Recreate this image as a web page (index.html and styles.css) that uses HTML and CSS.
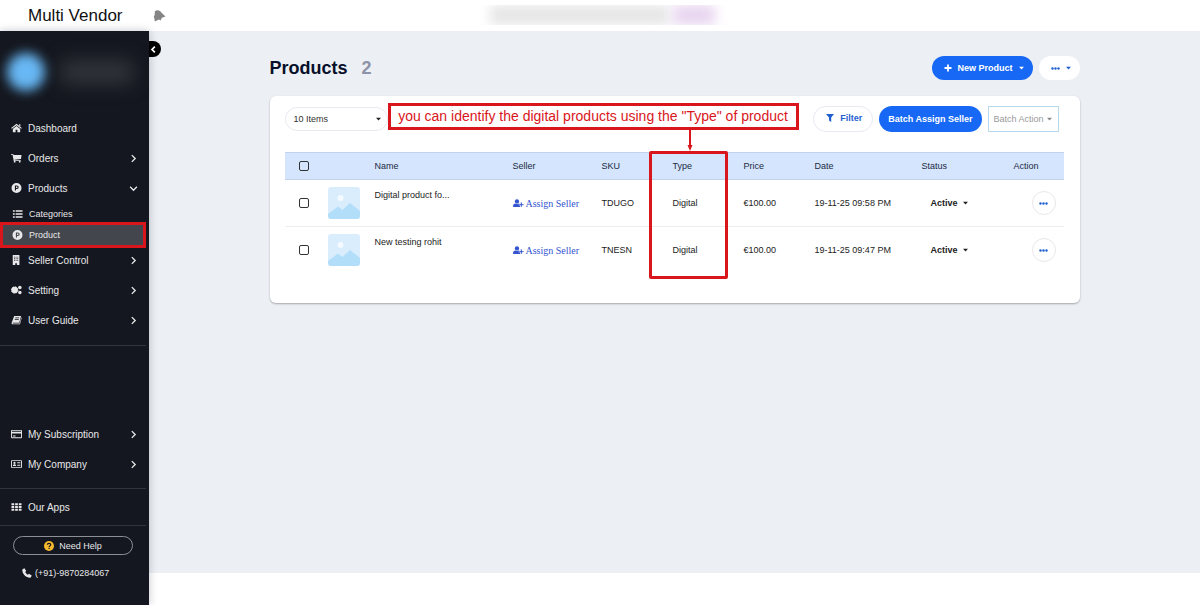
FILE: index.html
```html
<!DOCTYPE html>
<html lang="en">
<head>
    <meta charset="UTF-8">
    <meta name="viewport" content="width=device-width, initial-scale=1.0">
    <title>Multi Vendor - Products</title>
    <link rel="stylesheet" href="styles.css">
</head>
<body>
    <!-- shared icons -->
    <svg class="sprite" aria-hidden="true">
        <symbol id="chevron" viewBox="0 0 8 8"><path d="M2.5 1 5.5 4 2.5 7" fill="none" stroke="currentColor" stroke-width="1.2"/></symbol>
        <symbol id="caret" viewBox="0 0 6 4"><path d="M0 .5h6L3 3.7z"/></symbol>
        <symbol id="dots" viewBox="0 0 9 3"><circle cx="1.5" cy="1.5" r="1.2"/><circle cx="4.5" cy="1.5" r="1.2"/><circle cx="7.5" cy="1.5" r="1.2"/></symbol>
        <symbol id="product" viewBox="0 0 10 10"><path fill-rule="evenodd" d="M5 0a5 5 0 1 1 0 10A5 5 0 0 1 5 0zM3.4 2.4v5.2h1.1V6h.9a1.8 1.8 0 0 0 0-3.6zm1.1 1h.8a.8.8 0 0 1 0 1.6h-.8z"/></symbol>
        <symbol id="add-user" viewBox="0 0 12 10"><circle cx="4.3" cy="2.7" r="2.4"/><path d="M0 9V7.8C0 6.2 1.2 5 2.4 5c1.2.7 2.6.7 3.8 0 .7.1 1.1.4 1.5.9V9z"/><path d="M8.4 3.6h1.5v1.9h1.9V7H9.9v1.9H8.4V7H6.5V5.500h1.9z" stroke="#fff" stroke-width=".4"/></symbol>
        <symbol id="picture" viewBox="0 0 32 32"><rect width="32" height="32" rx="3" fill="#d9edfd"/><circle cx="12.500" cy="11" r="3" fill="#f4faff"/><path d="M0 27l10-7.500 4.500 3.500L22 16l10 8v5a3 3 0 0 1-3 3H3a3 3 0 0 1-3-3z" fill="#b3defa"/></symbol>
    </svg>

    <header class="topbar">
        <span class="brand">Multi Vendor</span>
        <svg class="bell" viewBox="0 0 14 14"><path d="M2 2.500C4.500 0 8 1.500 9.200 4L13.500 8l-4 1.500-1.200 3-2-1.200L2 13.500l-.5-3.200L.8 8l1-1.500z"/></svg>
        <div class="notice"><span class="notice-text"></span><span class="notice-tag"></span></div>
    </header>

    <div class="layout">
        <aside class="sidebar">
            <div class="profile">
                <span class="avatar"></span>
                <span class="profile-name"></span>
            </div>
            <nav>
                <ul class="menu">
                    <li><a href="#"><svg class="icon" viewBox="0 0 12 10"><path d="M6 .3 11.800 5l-.8.900-5-4-5 4L.2 5zM8.700.8h1.500v2.500L8.700 2zM2 6l4-3.200L10 6v3.700H7V6.800H5v2.900H2z"/></svg>Dashboard</a></li>
                    <li><a href="#"><svg class="icon" viewBox="0 0 12 10"><path d="M0 .5h2.400l.4 1.200h8.700l-.6 4.300-7 .8.2.7h6.600v.8H3L1.700 1.400H0z"/><circle cx="4" cy="9" r="1"/><circle cx="9.500" cy="9" r="1"/></svg>Orders<svg class="arrow"><use href="#chevron"/></svg></a></li>
                    <li>
                        <a href="#"><svg class="icon"><use href="#product"/></svg>Products<svg class="arrow open"><use href="#chevron"/></svg></a>
                        <ul class="submenu">
                            <li><a href="#"><svg class="icon" viewBox="0 0 12 10"><path d="M1 1h2v1.600H1zM4 1h7.500v1.600H4zM1 4.200h2v1.600H1zm3 0h7.500v1.600H4zM1 7.400h2V9H1zm3 0h7.500V9H4z"/></svg>Categories</a></li>
                            <li class="active"><a href="#"><svg class="icon"><use href="#product"/></svg>Product</a></li>
                        </ul>
                    </li>
                    <li><a href="#"><svg class="icon" viewBox="0 0 12 12"><path fill-rule="evenodd" d="M1.500 0h8v12H6.500v-2h-2v2h-3zM3 2v1h1V2zm2 0v1h1V2zm2 0v1h1V2zM3 4v1h1V4zm2 0v1h1V4zm2 0v1h1V4zM3 6v1h1V6zm2 0v1h1V6zm2 0v1h1V6z"/></svg>Seller Control<svg class="arrow"><use href="#chevron"/></svg></a></li>
                    <li><a href="#"><svg class="icon" viewBox="0 0 12 10" fill="none" stroke="currentColor"><circle cx="4" cy="5" r="2.300" stroke-width="1.800"/><circle cx="4" cy="5" r="3.500" stroke-width="1" stroke-dasharray="1.400 1.350"/><circle cx="9.700" cy="2.300" r="1.300" stroke-width="1.200"/><circle cx="9.700" cy="7.700" r="1.300" stroke-width="1.200"/></svg>Setting<svg class="arrow"><use href="#chevron"/></svg></a></li>
                    <li><a href="#"><svg class="icon" viewBox="0 0 12 10"><path fill-rule="evenodd" d="M3.500.5H11L9 8H2.200c-.6 0-.6.700 0 .7h7.200L11.300 2l.4.5L9.800 9.700H1.700C.8 9.700.4 8.800.7 8zM4.700 2.300l-.2.700h4.300l.2-.7zm-.5 1.600-.2.700h4.300l.2-.7z"/></svg>User Guide<svg class="arrow"><use href="#chevron"/></svg></a></li>
                </ul>
                <ul class="menu account">
                    <li><a href="#"><svg class="icon" viewBox="0 0 12 10"><path fill-rule="evenodd" d="M1 .5h10a1 1 0 0 1 1 1v7a1 1 0 0 1-1 1H1a1 1 0 0 1-1-1v-7a1 1 0 0 1 1-1zm0 1v1h10v-1zm0 3v4h10v-4zm1 2.200h3v1H2z"/></svg>My Subscription<svg class="arrow"><use href="#chevron"/></svg></a></li>
                    <li><a href="#"><svg class="icon" viewBox="0 0 12 10"><path fill-rule="evenodd" d="M1 .8h10a1 1 0 0 1 1 1v6.400a1 1 0 0 1-1 1H1a1 1 0 0 1-1-1V1.800a1 1 0 0 1 1-1zm0 1v6.400h10V1.800z"/><circle cx="3.800" cy="3.800" r="1.200"/><path d="M2 7.300c0-2.600 3.600-2.600 3.600 0zM6.800 3h3.400v.8H6.800zm0 1.600h3.400v.8H6.800zm0 1.600h3.400V7H6.800z"/></svg>My Company<svg class="arrow"><use href="#chevron"/></svg></a></li>
                </ul>
                <ul class="menu apps">
                    <li><a href="#"><svg class="icon" viewBox="0 0 12 10"><path d="M.5 1h3v2.200h-3zM4.500 1h3v2.200h-3zM8.500 1h3v2.200h-3zM.5 4h3v2.200h-3zM4.500 4h3v2.200h-3zM8.500 4h3v2.200h-3zM.5 7h3v2.200h-3zM4.500 7h3v2.200h-3zM8.500 7h3v2.200h-3z"/></svg>Our Apps</a></li>
                </ul>
            </nav>
            <div class="support">
                <button type="button" class="help"><svg viewBox="0 0 10 10"><circle cx="5" cy="5" r="5" fill="#f5b82e"/><path d="M3.300 3.800c.1-2 3.500-2 3.400 0C6.700 4.900 5.100 4.900 5.100 6M5.100 6.800v1.200" fill="none" stroke="#14171f" stroke-width="1.200"/></svg>Need Help</button>
                <a class="phone" href="tel:+919870284067"><svg viewBox="0 0 10 10"><path d="M.5 1.200 2.500.3 4.200 3l-1 1.100c.5 1.200 1.500 2.100 2.700 2.700L7 5.800l2.700 1.700-.9 2C5 10.500-.7 5.500.5 1.200z"/></svg>(+91)-9870284067</a>
            </div>
            <button type="button" class="collapse" aria-label="Collapse menu"><svg viewBox="0 0 8 8"><path d="M5.200 1.500 2.700 4l2.500 2.500" fill="none" stroke="#fff" stroke-width="1.500"/></svg></button>
        </aside>

        <main class="content">
            <div class="container">
                <div class="page-head">
                    <h1>Products <span class="count">2</span></h1>
                    <div class="head-buttons">
                        <button type="button" class="btn primary"><svg class="plus" viewBox="0 0 8 8"><path d="M4 .5v7M.5 4h7" stroke="currentColor" stroke-width="1.800"/></svg>New Product<svg class="caret"><use href="#caret"/></svg></button>
                        <button type="button" class="btn more" aria-label="More"><svg class="dots"><use href="#dots"/></svg><svg class="caret"><use href="#caret"/></svg></button>
                    </div>
                </div>

                <section class="card">
                    <div class="toolbar">
                        <div class="select-wrap">
                            <select class="page-size" aria-label="Items per page">
                                <option>10 Items</option>
                                <option>20 Items</option>
                            </select>
                            <svg class="caret"><use href="#caret"/></svg>
                        </div>
                        <div class="tools">
                            <button type="button" class="btn filter"><svg viewBox="0 0 8 8"><path d="M0 0h8L5.200 3.600V8L3 6.500V3.600z"/></svg>Filter</button>
                            <button type="button" class="btn primary">Batch Assign Seller</button>
                            <div class="select-wrap">
                                <select class="batch" aria-label="Batch action">
                                    <option>Batch Action</option>
                                </select>
                                <svg class="caret"><use href="#caret"/></svg>
                            </div>
                        </div>
                    </div>

                    <table class="products">
                        <colgroup>
                            <col class="col-check"><col class="col-image"><col><col class="col-seller"><col class="col-small"><col class="col-small"><col class="col-small"><col class="col-date"><col class="col-status"><col class="col-action">
                        </colgroup>
                        <thead>
                            <tr>
                                <th><input type="checkbox" aria-label="Select all"></th>
                                <th></th>
                                <th>Name</th>
                                <th>Seller</th>
                                <th>SKU</th>
                                <th>Type</th>
                                <th>Price</th>
                                <th>Date</th>
                                <th>Status</th>
                                <th>Action</th>
                            </tr>
                        </thead>
                        <tbody>
                            <tr>
                                <td><input type="checkbox" aria-label="Select TDUGO"></td>
                                <td><svg class="thumb"><use href="#picture"/></svg></td>
                                <td class="name">Digital product fo...</td>
                                <td><a class="assign" href="#"><svg><use href="#add-user"/></svg>Assign Seller</a></td>
                                <td>TDUGO</td>
                                <td>Digital</td>
                                <td>€100.00</td>
                                <td>19-11-25 09:58 PM</td>
                                <td><button type="button" class="status">Active<svg class="caret"><use href="#caret"/></svg></button></td>
                                <td><button type="button" class="row-menu" aria-label="Actions"><svg class="dots"><use href="#dots"/></svg></button></td>
                            </tr>
                            <tr>
                                <td><input type="checkbox" aria-label="Select TNESN"></td>
                                <td><svg class="thumb"><use href="#picture"/></svg></td>
                                <td class="name">New testing rohit</td>
                                <td><a class="assign" href="#"><svg><use href="#add-user"/></svg>Assign Seller</a></td>
                                <td>TNESN</td>
                                <td>Digital</td>
                                <td>€100.00</td>
                                <td>19-11-25 09:47 PM</td>
                                <td><button type="button" class="status">Active<svg class="caret"><use href="#caret"/></svg></button></td>
                                <td><button type="button" class="row-menu" aria-label="Actions"><svg class="dots"><use href="#dots"/></svg></button></td>
                            </tr>
                        </tbody>
                    </table>

                    <!-- callout over the Type column -->
                    <div class="callout">you can identify the digital products using the "Type" of product</div>
                    <svg class="callout-arrow" viewBox="0 0 8 22"><path d="M4 0v18" stroke="#d9161b" stroke-width="2"/><path d="M1.500 15h5L4 21z" fill="#d9161b"/></svg>
                    <div class="type-outline"></div>
                </section>
            </div>
        </main>
    </div>
</body>
</html>
```
FILE: styles.css
```css
* {
    box-sizing: border-box;
}

body {
    margin: 0;
    min-height: 100vh;
    display: flex;
    flex-direction: column;
    font-family: "Liberation Sans", Arial, sans-serif;
    font-size: 9px;
    color: #222;
    background: #fff;
}

button,
select {
    font-family: inherit;
    font-size: 9px;
    margin: 0;
}

a {
    text-decoration: none;
}

ul {
    list-style: none;
    margin: 0;
    padding: 0;
}

svg {
    fill: currentColor;
    flex: none;
}

.sprite {
    position: absolute;
    width: 0;
    height: 0;
}

/* Top bar */
.topbar {
    position: relative;
    display: flex;
    align-items: center;
    height: 31px;
    padding-left: 28px;
    background: #fff;
}

.brand {
    width: 125px;
    font-size: 17px;
    color: #111;
}

.bell {
    width: 13px;
    height: 13px;
    color: #858585;
}

.notice {
    position: absolute;
    top: 5px;
    left: 40%;
    width: 245px;
    height: 20px;
    overflow: hidden;
    display: flex;
    gap: 4px;
    padding: 0 10px;
}

.notice-text {
    flex: 1;
    background: #e6e6e6;
    filter: blur(6px);
}

.notice-tag {
    width: 42px;
    background: #e8d5f0;
    filter: blur(6px);
}

.layout {
    flex: 1;
    display: flex;
}

/* Sidebar */
.sidebar {
    position: relative;
    z-index: 1;
    width: 149px;
    padding-right: 3px;
    background: #14171f;
    color: #e8e8ea;
    box-shadow: 0 0 8px rgba(20, 23, 60, .25);
}

.profile {
    display: flex;
    align-items: center;
    gap: 16px;
    height: 82px;
    padding-left: 7px;
}

.avatar {
    width: 38px;
    height: 38px;
    border-radius: 50%;
    background: #68b8f5;
    filter: blur(6px);
}

.profile-name {
    width: 72px;
    height: 24px;
    background: #30343b;
    filter: blur(9px);
}

.menu a {
    display: flex;
    align-items: center;
    height: 30px;
    padding: 0 8px 0 11px;
    font-size: 10px;
    color: inherit;
}

.icon {
    width: 11px;
    height: 10px;
    margin-right: 6px;
}

.arrow {
    width: 9px;
    height: 9px;
    margin-left: auto;
}

.arrow.open {
    transform: rotate(90deg);
}

.menu .submenu a {
    height: 21px;
    padding-left: 12px;
    font-size: 9px;
}

.submenu .active {
    position: relative;
    background: #43474d;
}

.submenu .active::after {
    content: "";
    position: absolute;
    inset: -2px 0 -3px;
    border: 3px solid #d9161b;
    pointer-events: none;
}

.account {
    margin-top: 10px;
    padding: 73px 0 9px;
    border-top: 1px solid #30343c;
}

.apps {
    padding: 3px 0;
    border: 1px solid #30343c;
    border-width: 1px 0;
}

.support {
    display: flex;
    flex-direction: column;
    gap: 13px;
    padding: 10px 13px 0;
}

.help {
    display: flex;
    align-items: center;
    justify-content: center;
    gap: 5px;
    height: 19px;
    border: 1px solid #8c8f95;
    border-radius: 10px;
    background: none;
    color: inherit;
}

.help svg,
.phone svg {
    width: 10px;
    height: 10px;
}

.phone {
    display: flex;
    align-items: center;
    gap: 3px;
    padding-left: 9px;
    color: inherit;
}

.collapse {
    position: absolute;
    top: 10px;
    left: 100%;
    width: 12px;
    height: 16px;
    padding: 0;
    border: 0;
    border-radius: 0 8px 8px 0;
    background: #000;
}

.collapse svg {
    display: block;
    width: 9px;
    height: 9px;
}

/* Content */
.content {
    flex: 1;
    margin-bottom: 32px;
    padding: 25px 15px;
    background: #eceff3;
}

.container {
    max-width: 810px;
    margin: 0 auto;
}

.page-head,
.head-buttons,
.toolbar,
.tools {
    display: flex;
    align-items: center;
}

.page-head {
    justify-content: space-between;
    margin-bottom: 16px;
}

h1 {
    margin: 0;
    font-size: 18px;
    color: #080f2b;
}

.count {
    margin-left: 9px;
    color: #8d92a8;
}

.head-buttons {
    gap: 6px;
}

.btn {
    display: flex;
    align-items: center;
    justify-content: center;
    height: 26px;
    padding: 0 9px;
    border: 0;
    border-radius: 13px;
    font-weight: bold;
    background: #fff;
    color: #1f5fd0;
}

.btn.primary {
    background: #1769f5;
    color: #fff;
}

.head-buttons .btn {
    height: 24px;
    padding: 0 9px 0 12px;
}

.caret {
    width: 5px;
    height: 4px;
}

.btn .caret {
    margin-left: 6px;
}

.plus {
    width: 8px;
    height: 8px;
    margin-right: 5px;
}

.dots {
    width: 9px;
    height: 3px;
}

.card {
    position: relative;
    padding: 10px 16px 29px 15px;
    border-radius: 6px;
    background: #fff;
    box-shadow: 0 1px 2px rgba(0, 0, 0, .3);
}

.toolbar {
    justify-content: space-between;
    margin-bottom: 20px;
    padding-right: 5px;
}

.tools {
    gap: 6px;
}

.btn.filter {
    gap: 6px;
    padding: 0 10px 2px 12px;
    border: 1px solid #e8eaf3;
}

.filter svg {
    width: 8px;
    height: 8px;
}

.select-wrap {
    position: relative;
}

.select-wrap select {
    appearance: none;
    display: block;
    background: #fff;
    outline: 0;
}

.select-wrap .caret {
    position: absolute;
    top: 50%;
    right: 7px;
    margin-top: -2px;
    pointer-events: none;
}

.page-size {
    width: 103px;
    height: 24px;
    padding: 0 8px;
    border: 1px solid #e8eaf0;
    border-radius: 12px;
    color: #333;
}

.batch {
    width: 71px;
    height: 26px;
    padding: 0 5px;
    border: 1px solid #b9daee;
    color: #999;
}

.batch + .caret {
    color: #888;
}

/* Products table */
.products {
    width: 100%;
    table-layout: fixed;
    border-collapse: collapse;
}

.col-check {
    width: 43px;
}

.col-image {
    width: 47px;
}

.col-seller {
    width: 89px;
}

.col-small {
    width: 71px;
}

.col-date {
    width: 107px;
}

.col-status {
    width: 92px;
}

.col-action {
    width: 50px;
}

.products th {
    height: 27px;
    padding: 0;
    border: 1px solid #bfd3ef;
    border-width: 1px 0;
    font-weight: normal;
    text-align: left;
    color: #1d2940;
    background: #d4e5fd;
}

.products td {
    height: 47px;
    padding: 0;
    white-space: nowrap;
}

.products tbody tr + tr {
    border-top: 1px solid #ededed;
}

.products input {
    appearance: none;
    display: block;
    width: 10px;
    height: 10px;
    margin: 0 0 0 14px;
    border: 1px solid #333;
    border-radius: 2px;
    background: #fff;
}

.products th input {
    background: none;
}

.thumb {
    display: block;
    width: 32px;
    height: 32px;
}

.products .name {
    padding-top: 10px;
    vertical-align: top;
}

.assign {
    display: flex;
    align-items: center;
    gap: 2px;
    font-family: "Liberation Serif", "Times New Roman", serif;
    font-size: 10px;
    color: #3455cf;
}

.assign svg {
    width: 11px;
    height: 9px;
}

.status {
    display: flex;
    align-items: center;
    gap: 5px;
    padding: 0 0 0 9px;
    border: 0;
    background: none;
    font-weight: bold;
    color: #222;
}

.row-menu {
    display: flex;
    align-items: center;
    justify-content: center;
    width: 24px;
    height: 24px;
    margin-left: 18px;
    padding: 0;
    border: 1px solid #e8e8ec;
    border-radius: 50%;
    background: #fff;
    color: #1f5fd0;
}

/* Callout */
.callout {
    position: absolute;
    top: 7px;
    left: 118px;
    width: 411px;
    height: 27px;
    border: 3px solid #d9161b;
    background: #fff;
    font-size: 14px;
    line-height: 21px;
    text-align: center;
    white-space: nowrap;
    color: #d9161b;
}

.callout-arrow {
    position: absolute;
    top: 34px;
    left: 416px;
    width: 8px;
    height: 22px;
}

.type-outline {
    position: absolute;
    top: 55px;
    left: 379px;
    width: 79px;
    height: 128px;
    border: 3px solid #d9161b;
    border-radius: 2px;
    pointer-events: none;
}
```
